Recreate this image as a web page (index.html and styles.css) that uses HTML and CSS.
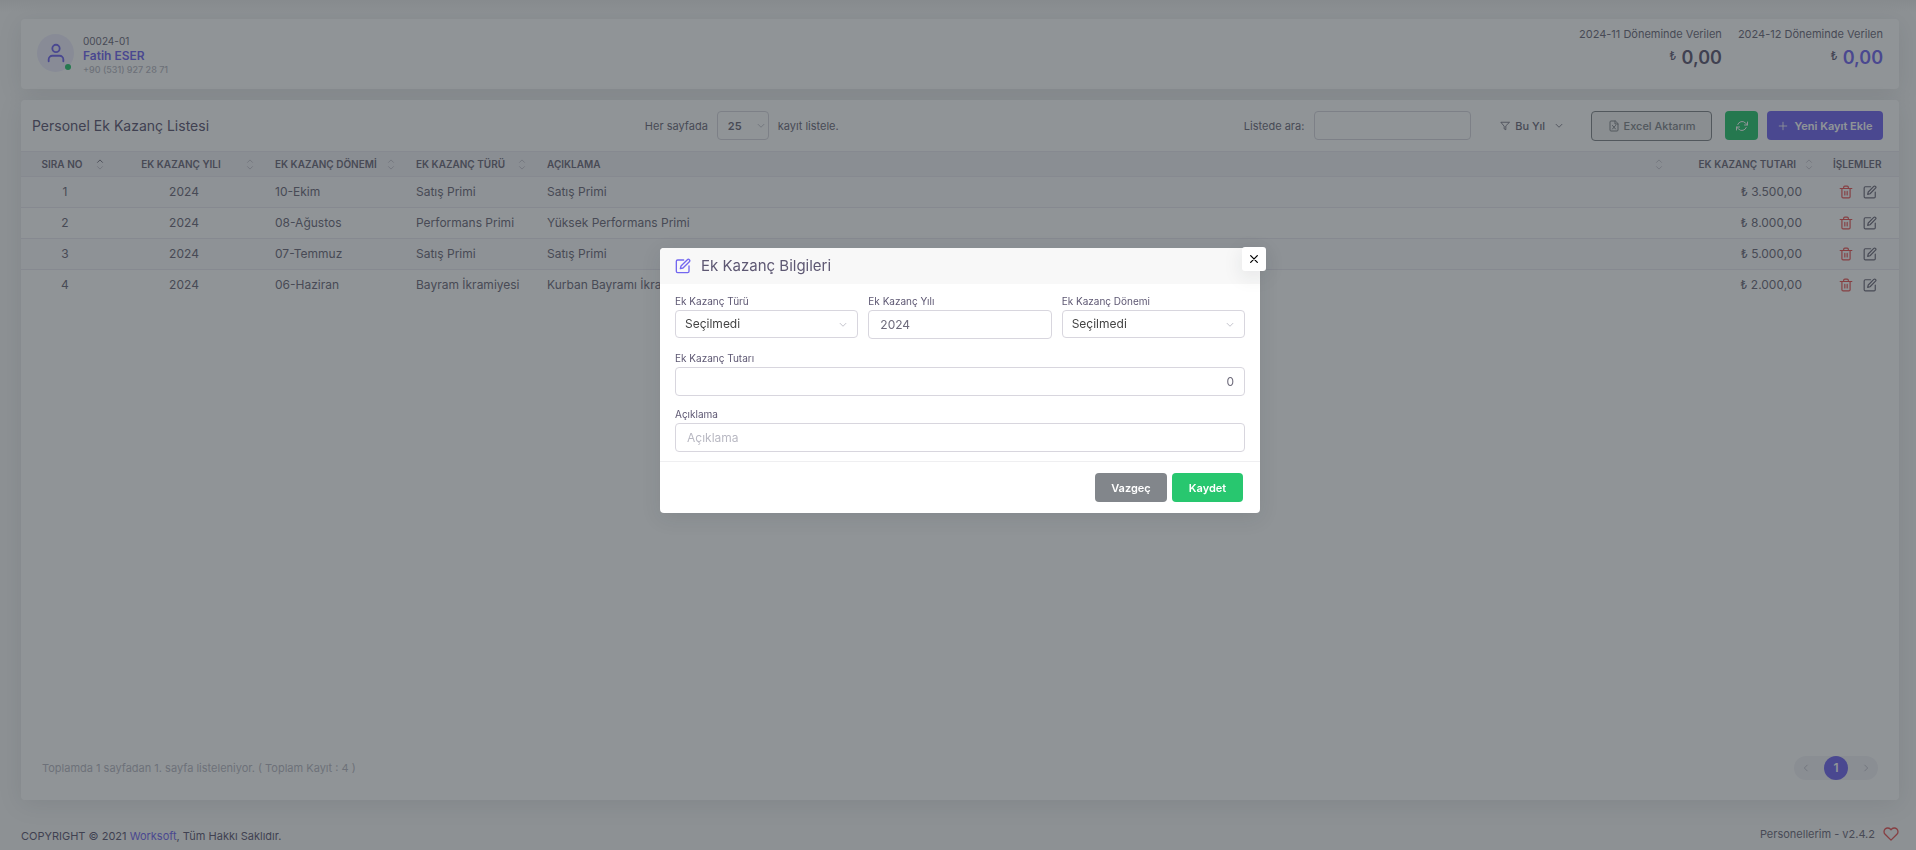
FILE: index.html
```html
<!DOCTYPE html>
<html lang="tr">
<head>
<meta charset="utf-8">
<title>Personel Ek Kazanç Listesi</title>
<meta name="viewport" content="width=device-width, initial-scale=1">
<link rel="stylesheet" href="styles.css">
</head>
<body>
<svg class="sprite" aria-hidden="true">
  <symbol id="i-user" viewBox="0 0 24 24"><path d="M20 21v-2a4 4 0 0 0-4-4H8a4 4 0 0 0-4 4v2"/><circle cx="12" cy="7" r="4"/></symbol>
  <symbol id="i-sort" viewBox="0 0 10 12"><path class="sort-up" d="M2 4l3-3 3 3"/><path class="sort-down" d="M2 8l3 3 3-3"/></symbol>
  <symbol id="i-edit" viewBox="0 0 24 24"><path d="M13 3H4a2 2 0 0 0-2 2v15a2 2 0 0 0 2 2h15a2 2 0 0 0 2-2v-8"/><path d="M18.5 2.5a2.1 2.1 0 0 1 3 3L12 15l-4 1 1-4z"/></symbol>
  <symbol id="i-trash" viewBox="0 0 24 24"><path d="M2 6h20M19 6v14a2 2 0 0 1-2 2H7a2 2 0 0 1-2-2V6M8 6V4a2 2 0 0 1 2-2h4a2 2 0 0 1 2 2v2M10 11v6M14 11v6"/></symbol>
  <symbol id="i-filter" viewBox="0 0 24 24"><path d="M22 3H2l8 9.500V19l4 2v-8.500z"/></symbol>
  <symbol id="i-chev" viewBox="0 0 24 24"><path d="M5 8l7 7 7-7"/></symbol>
  <symbol id="i-left" viewBox="0 0 24 24"><path d="M15 19l-7-7 7-7"/></symbol>
  <symbol id="i-right" viewBox="0 0 24 24"><path d="M9 19l7-7-7-7"/></symbol>
  <symbol id="i-file" viewBox="0 0 24 24"><path d="M14 2H6a2 2 0 0 0-2 2v16a2 2 0 0 0 2 2h12a2 2 0 0 0 2-2V8zM14 2v6h6M9 11l6 7M15 11l-6 7"/></symbol>
  <symbol id="i-refresh" viewBox="0 0 24 24"><path d="M23 4v6h-6M1 20v-6h6"/><path d="M3.500 9a9 9 0 0 1 14.900-3.400L23 10M1 14l4.600 4.400A9 9 0 0 0 20.500 15"/></symbol>
  <symbol id="i-plus" viewBox="0 0 24 24"><path d="M12 3v18M3 12h18"/></symbol>
  <symbol id="i-x" viewBox="0 0 24 24"><path d="M4 4l16 16M20 4L4 20"/></symbol>
  <symbol id="i-heart" viewBox="0 0 24 24"><path d="M20.840 4.610a5.500 5.500 0 0 0-7.780 0L12 5.670l-1.060-1.060a5.500 5.500 0 0 0-7.780 7.780L12 21.230l8.840-8.840a5.500 5.500 0 0 0 0-7.780z"/></symbol>
</svg>

<div class="page">
  <main class="content">
    <section class="card profile">
      <div class="avatar"><svg class="icon icon-xl"><use href="#i-user"/></svg><span class="status"></span></div>
      <div class="person">
        <span class="code">00024-01</span>
        <strong class="name">Fatih ESER</strong>
        <span class="phone">+90 (531) 927 28 71</span>
      </div>
      <div class="stats">
        <div class="stat"><span>2024-11 Döneminde Verilen</span><p><sup>₺</sup> <b>0,00</b></p></div>
        <div class="stat stat-primary"><span>2024-12 Döneminde Verilen</span><p><sup>₺</sup> <b>0,00</b></p></div>
      </div>
    </section>

    <section class="card list">
      <div class="toolbar">
        <h1>Personel Ek Kazanç Listesi</h1>
        <div class="length">
          <label for="length">Her sayfada</label>
          <span class="select-box length-box"><select id="length"><option>25</option></select><svg class="icon icon-sm"><use href="#i-chev"/></svg></span>
          <span>kayıt listele.</span>
        </div>
        <div class="tools">
          <label for="search">Listede ara:</label>
          <input class="field search" id="search" type="search">
          <button class="btn-plain" type="button"><svg class="icon icon-sm"><use href="#i-filter"/></svg>Bu Yıl<svg class="icon icon-sm chev"><use href="#i-chev"/></svg></button>
          <button class="btn btn-outline" type="button"><svg class="icon icon-md"><use href="#i-file"/></svg>Excel Aktarım</button>
          <button class="btn btn-refresh" type="button" aria-label="Yenile"><svg class="icon icon-md"><use href="#i-refresh"/></svg></button>
          <button class="btn btn-primary" type="button"><svg class="icon icon-sm"><use href="#i-plus"/></svg>Yeni Kayıt Ekle</button>
        </div>
      </div>

      <table>
        <colgroup><col class="c-no"><col class="c-year"><col class="c-period"><col class="c-type"><col><col class="c-amount"><col class="c-actions"></colgroup>
        <thead>
          <tr>
            <th class="center"><button type="button"><span>SIRA NO</span><svg class="sort asc"><use href="#i-sort"/></svg></button></th>
            <th class="center"><button type="button"><span>EK KAZANÇ YILI</span><svg class="sort"><use href="#i-sort"/></svg></button></th>
            <th><button type="button"><span>EK KAZANÇ DÖNEMİ</span><svg class="sort"><use href="#i-sort"/></svg></button></th>
            <th><button type="button"><span>EK KAZANÇ TÜRÜ</span><svg class="sort"><use href="#i-sort"/></svg></button></th>
            <th><button type="button"><span>AÇIKLAMA</span><svg class="sort"><use href="#i-sort"/></svg></button></th>
            <th class="right"><button type="button"><span>EK KAZANÇ TUTARI</span><svg class="sort"><use href="#i-sort"/></svg></button></th>
            <th class="actions-head">İŞLEMLER</th>
          </tr>
        </thead>
        <tbody>
          <tr><td class="center">1</td><td class="center">2024</td><td>10-Ekim</td><td>Satış Primi</td><td>Satış Primi</td><td class="right">₺ 3.500,00</td>
            <td><div class="actions"><button class="danger" type="button" aria-label="Sil"><svg class="icon icon-row"><use href="#i-trash"/></svg></button><button type="button" aria-label="Düzenle"><svg class="icon icon-row"><use href="#i-edit"/></svg></button></div></td></tr>
          <tr><td class="center">2</td><td class="center">2024</td><td>08-Ağustos</td><td>Performans Primi</td><td>Yüksek Performans Primi</td><td class="right">₺ 8.000,00</td>
            <td><div class="actions"><button class="danger" type="button" aria-label="Sil"><svg class="icon icon-row"><use href="#i-trash"/></svg></button><button type="button" aria-label="Düzenle"><svg class="icon icon-row"><use href="#i-edit"/></svg></button></div></td></tr>
          <tr><td class="center">3</td><td class="center">2024</td><td>07-Temmuz</td><td>Satış Primi</td><td>Satış Primi</td><td class="right">₺ 5.000,00</td>
            <td><div class="actions"><button class="danger" type="button" aria-label="Sil"><svg class="icon icon-row"><use href="#i-trash"/></svg></button><button type="button" aria-label="Düzenle"><svg class="icon icon-row"><use href="#i-edit"/></svg></button></div></td></tr>
          <tr><td class="center">4</td><td class="center">2024</td><td>06-Haziran</td><td>Bayram İkramiyesi</td><td>Kurban Bayramı İkramiyesi</td><td class="right">₺ 2.000,00</td>
            <td><div class="actions"><button class="danger" type="button" aria-label="Sil"><svg class="icon icon-row"><use href="#i-trash"/></svg></button><button type="button" aria-label="Düzenle"><svg class="icon icon-row"><use href="#i-edit"/></svg></button></div></td></tr>
        </tbody>
      </table>

      <div class="list-footer">
        <p>Toplamda 1 sayfadan 1. sayfa listeleniyor. ( Toplam Kayıt : 4 )</p>
        <nav class="pager" aria-label="Sayfalar">
          <button type="button" aria-label="Önceki"><svg class="icon icon-sm"><use href="#i-left"/></svg></button>
          <button class="current" type="button">1</button>
          <button type="button" aria-label="Sonraki"><svg class="icon icon-sm"><use href="#i-right"/></svg></button>
        </nav>
      </div>
    </section>
  </main>

  <footer class="page-footer">
    <p>COPYRIGHT © 2021 <a href="#">Worksoft</a>, Tüm Hakkı Saklıdır.</p>
    <p class="version">Personellerim - v2.4.2 <svg class="icon icon-heart"><use href="#i-heart"/></svg></p>
  </footer>
</div>

<div class="backdrop">
  <form class="modal" role="dialog" aria-modal="true" aria-labelledby="modal-title">
    <button class="close" type="button" aria-label="Kapat"><svg class="icon icon-sm"><use href="#i-x"/></svg></button>
    <header class="modal-header">
      <svg class="icon icon-title"><use href="#i-edit"/></svg>
      <h2 id="modal-title">Ek Kazanç Bilgileri</h2>
    </header>
    <div class="modal-body">
      <div class="row">
        <div class="group">
          <label for="type">Ek Kazanç Türü</label>
          <span class="select-box"><select id="type"><option>Seçilmedi</option></select><svg class="icon icon-sm"><use href="#i-chev"/></svg></span>
        </div>
        <div class="group">
          <label for="year">Ek Kazanç Yılı</label>
          <input class="field" id="year" type="text" value="2024">
        </div>
        <div class="group">
          <label for="period">Ek Kazanç Dönemi</label>
          <span class="select-box"><select id="period"><option>Seçilmedi</option></select><svg class="icon icon-sm"><use href="#i-chev"/></svg></span>
        </div>
      </div>
      <div class="group">
        <label for="amount">Ek Kazanç Tutarı</label>
        <input class="field amount" id="amount" type="text" value="0">
      </div>
      <div class="group">
        <label for="note">Açıklama</label>
        <input class="field" id="note" type="text" placeholder="Açıklama">
      </div>
    </div>
    <footer class="modal-footer">
      <button class="btn btn-secondary" type="button">Vazgeç</button>
      <button class="btn btn-success" type="submit">Kaydet</button>
    </footer>
  </form>
</div>
</body>
</html>
```

FILE: styles.css
```css
:root {
  --primary: #7367f0;
  --success: #28c76f;
  --danger: #ea5455;
  --text: #6e6b7b;
  --heading: #5e5873;
  --muted: #b9b9c3;
  --line: #ebe9f1;
  --input-line: #d8d6de;
}

* { box-sizing: border-box; }

body {
  margin: 0;
  background: #f8f8f8;
  color: var(--text);
  font: 11px/18px Inter, "Noto Sans", sans-serif;
}

h1, h2, p { margin: 0; font-weight: 400; }

button, input, select { font: inherit; color: inherit; }

button {
  border: 0;
  padding: 0;
  background: none;
  cursor: pointer;
}

.sprite { display: none; }

.icon {
  flex: none;
  fill: none;
  stroke: currentColor;
  stroke-width: 2;
  stroke-linecap: round;
  stroke-linejoin: round;
}
.icon-sm { width: 10px; height: 10px; }
.icon-md { width: 12px; height: 12px; }
.icon-row { width: 14px; height: 14px; }
.icon-title, .icon-heart { width: 16px; height: 16px; }
.icon-xl { width: 22px; height: 22px; }

.page {
  display: flex;
  flex-direction: column;
  min-height: 100vh;
  background: linear-gradient(#ececec, #f8f8f8 12px);
}

.content {
  flex: 1;
  display: flex;
  flex-direction: column;
  gap: 11px;
  padding: 19px 17px 0 21px;
}

.card {
  border-radius: 4px;
  background: #fff;
  box-shadow: 0 4px 24px rgba(34, 41, 47, 0.1);
}

.profile {
  display: flex;
  align-items: flex-start;
  gap: 9px;
  height: 70px;
  padding: 6px 16px;
}

.avatar {
  position: relative;
  display: grid;
  place-items: center;
  width: 37px;
  height: 38px;
  margin-top: 9px;
  border-radius: 50%;
  background: #eeedfd;
  color: var(--primary);
}
.status {
  position: absolute;
  right: 3px;
  bottom: 2px;
  width: 6px;
  height: 6px;
  border-radius: 50%;
  background: var(--success);
}

.person {
  display: flex;
  flex-direction: column;
  padding-top: 9px;
  font-size: 9px;
  line-height: 14px;
}
.code { font-size: 10px; }
.name { color: var(--primary); font-size: 12px; font-weight: 600; line-height: 15px; }
.phone { color: var(--muted); font-weight: 500; }

.stats {
  display: flex;
  gap: 16px;
  margin-left: auto;
  text-align: right;
}
.stat p { line-height: 30px; color: var(--heading); }
.stat b { font-size: 18px; font-weight: 600; }
.stat sup { margin-right: 2px; font-size: 12px; line-height: 0; vertical-align: 4px; }
.stat-primary b { color: var(--primary); }

.list {
  flex: 1;
  display: flex;
  flex-direction: column;
}

.toolbar {
  display: grid;
  grid-template-columns: 33% 1fr auto;
  align-items: center;
  height: 51px;
  padding: 0 16px 0 11px;
}
.toolbar h1 { color: var(--heading); font-size: 14px; }

.length, .tools { display: flex; align-items: center; }
.length { gap: 9px; padding-left: 2px; }

.field, .select-box select {
  width: 100%;
  height: 29px;
  padding: 0 11px;
  border: 1px solid var(--input-line);
  border-radius: 4px;
  background: #fff;
}
.field::placeholder { color: var(--muted); }

.select-box {
  position: relative;
  display: block;
}
.select-box select {
  appearance: none;
  padding: 0 9px;
  color: #444;
}
.select-box .icon {
  position: absolute;
  top: 10px;
  right: 10px;
  color: var(--muted);
  pointer-events: none;
}
.length-box { width: 52px; }
.length-box select { padding-left: 10px; color: var(--text); font-weight: 600; }
.length-box .icon { right: 3px; }

.search { width: 157px; margin: 0 29px 0 10px; appearance: none; }

.btn-plain {
  display: flex;
  align-items: center;
  gap: 5px;
  margin-right: 27px;
  font-weight: 500;
}
.chev { margin-left: 4px; }

.btn {
  display: inline-flex;
  align-items: center;
  justify-content: center;
  height: 29px;
  border-radius: 4px;
  color: #fff;
  font-weight: 600;
}
.btn-outline {
  gap: 4px;
  width: 121px;
  height: 30px;
  border: 1px solid #82868b;
  background: rgba(130, 134, 139, 0.1);
  color: #82868b;
  font-weight: 500;
}
.btn-refresh { width: 33px; margin: 0 9px 0 13px; background: var(--success); }
.btn-primary { gap: 7px; width: 116px; background: var(--primary); }
.btn-secondary { width: 72px; background: #82868b; }
.btn-success { width: 71px; background: var(--success); }

table {
  width: 100%;
  table-layout: fixed;
  border-collapse: collapse;
}
.c-no { width: 88px; }
.c-year { width: 150px; }
.c-period { width: 141px; }
.c-type { width: 131px; }
.c-amount { width: 150px; }
.c-actions { width: 81px; }

th {
  height: 25px;
  padding: 0;
  border-top: 1px solid var(--line);
  border-bottom: 1px solid var(--line);
  background: #f3f2f7;
  font-size: 10px;
  font-weight: 600;
  line-height: 16px;
}
th button {
  display: flex;
  align-items: center;
  gap: 8px;
  width: 100%;
  padding: 0 4px 0 16px;
  font-weight: 600;
  text-align: left;
  white-space: nowrap;
}
th button span { flex: 1; }
.sort {
  --up: #c4c2cc;
  flex: none;
  width: 10px;
  height: 11px;
  fill: none;
  stroke-width: 1;
}
.asc { --up: #6e6b7b; }
.sort-up { stroke: var(--up); }
.sort-down { stroke: #c4c2cc; }

td {
  height: 31px;
  padding: 0 16px;
  border-bottom: 1px solid var(--line);
  font-size: 12px;
  white-space: nowrap;
}
tbody tr:nth-child(odd) { background: #fafafc; }
tbody tr:last-child td { border-bottom: 0; }
.center, .center button { text-align: center; }
.right, .right button { text-align: right; }
.actions-head { text-align: left; padding-left: 15px; }
.actions { display: flex; gap: 10px; padding-left: 5px; }
.actions button { display: flex; }
.actions .danger { color: var(--danger); }

.list-footer {
  display: flex;
  align-items: center;
  justify-content: space-between;
  margin-top: auto;
  padding: 0 21px 20px;
  color: var(--muted);
}

.pager {
  display: flex;
  justify-content: space-between;
  width: 84px;
  border-radius: 12px;
  background: #f3f2f7;
}
.pager button {
  display: grid;
  place-items: center;
  width: 24px;
  height: 24px;
}
.pager .current {
  border-radius: 50%;
  background: var(--primary);
  color: #fff;
  font-size: 12px;
  font-weight: 600;
}

.page-footer {
  display: flex;
  justify-content: space-between;
  align-items: flex-start;
  height: 50px;
  padding: 25px 17px 0 21px;
  color: var(--heading);
}
.page-footer p { margin-top: 2px; }
.page-footer a { color: var(--primary); text-decoration: none; }
.page-footer .version { display: flex; align-items: center; gap: 8px; margin-top: 0; color: var(--text); }
.icon-heart { color: var(--danger); }

.backdrop {
  position: fixed;
  inset: 0;
  display: flex;
  align-items: flex-start;
  justify-content: center;
  padding: 248px 0 0 4px;
  background: rgba(34, 41, 47, 0.5);
}

.modal {
  position: relative;
  width: 600px;
  border-radius: 4px;
  background: #fff;
  box-shadow: 0 5px 20px rgba(34, 41, 47, 0.1);
}

.close {
  position: absolute;
  top: -1px;
  right: -6px;
  display: grid;
  place-items: center;
  width: 24px;
  height: 24px;
  border-radius: 3px;
  background: #fff;
  color: #000;
  box-shadow: 0 5px 20px rgba(34, 41, 47, 0.1);
}
.close .icon { stroke-width: 3; }

.modal-header {
  display: flex;
  align-items: center;
  gap: 10px;
  height: 36px;
  padding: 0 15px;
  border-radius: 4px 4px 0 0;
  background: #f8f8f8;
}
.icon-title { color: var(--primary); }
.modal-header h2 { color: var(--heading); font-size: 15px; }

.modal-body {
  display: flex;
  flex-direction: column;
  gap: 11px;
  padding: 10px 15px 9px;
}
.row {
  display: grid;
  grid-template-columns: repeat(3, 1fr);
  gap: 10px;
  padding-bottom: 1px;
}
.group label {
  display: block;
  margin-bottom: 2px;
  color: var(--heading);
  font-size: 10px;
  line-height: 14px;
}
.modal .field, .modal select { font-size: 12px; }
.group .select-box select { height: 28px; }
.amount { text-align: right; padding-right: 10px; }

.modal-footer {
  display: flex;
  justify-content: flex-end;
  gap: 5px;
  padding: 11px 17px;
  border-top: 1px solid #efeff1;
}
```
